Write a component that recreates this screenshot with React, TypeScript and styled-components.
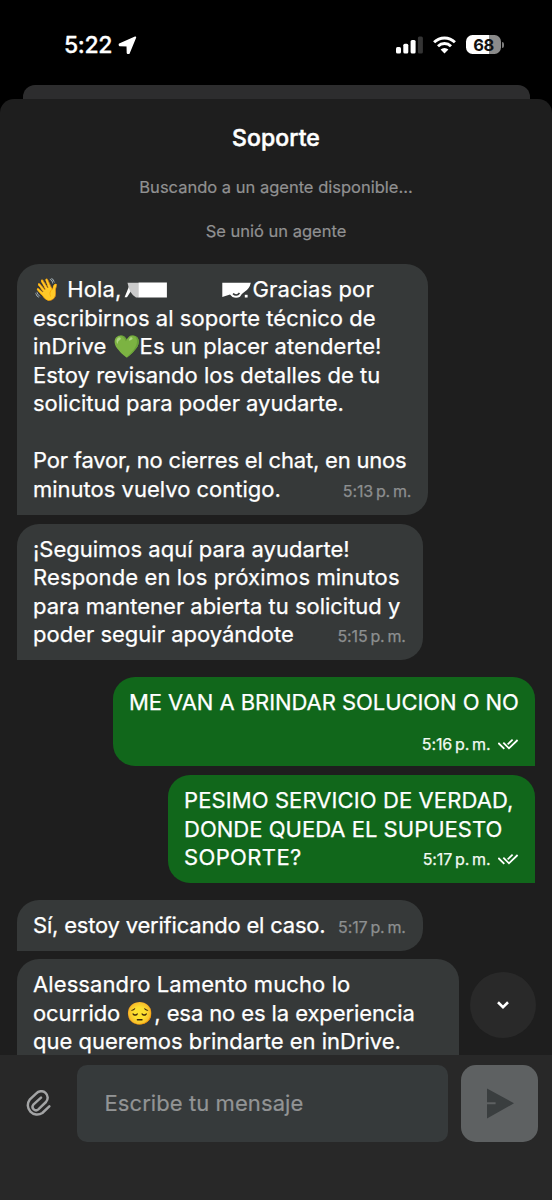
import React from 'react';
import styled, { createGlobalStyle } from 'styled-components';

const GlobalStyle = createGlobalStyle`
  body {
    margin: 0;
    background: #000;
    color: #fff;
    font-family: Inter, "Liberation Sans", sans-serif;
  }
`;

const Screen = styled.div`
  display: flex;
  flex-direction: column;
  width: 552px;
  height: 1200px;
  overflow: hidden;
  background: #000;
`;

const StatusBar = styled.header`
  display: flex;
  justify-content: space-between;
  align-items: center;
  box-sizing: border-box;
  height: 85px;
  padding: 4px 48px 0 64px;
`;

const Clock = styled.div`
  display: flex;
  align-items: center;
  gap: 6px;
  margin-top: 1px;
  font-size: 23px;
  font-weight: 500;
  line-height: 28px;
  letter-spacing: -0.35px;
  -webkit-text-stroke: 0.3px currentColor;
`;

const StatusIcons = styled.div`
  display: flex;
  align-items: center;
  gap: 10px;
`;

const Battery = styled.div`
  display: flex;
  align-items: center;
  gap: 1px;
`;

const BatteryLevel = styled.div`
  width: 35px;
  height: 19px;
  border-radius: 6.5px;
  background: linear-gradient(to right, #fff 67%, #8b8b8b 67%);
  color: #111;
  font-size: 16.5px;
  font-weight: 700;
  line-height: 20px;
  letter-spacing: -0.5px;
  text-align: center;
`;

const BatteryNub = styled.div`
  width: 2px;
  height: 6px;
  border-radius: 0 2px 2px 0;
  background: #7b7b7b;
`;

const BackSheet = styled.div`
  flex: none;
  height: 13.5px;
  margin: 0 22.5px;
  border-radius: 12px 12px 0 0;
  background: #2d2d2e;
`;

const Sheet = styled.main`
  display: flex;
  flex: 1;
  flex-direction: column;
  min-height: 0;
  border-radius: 14px 14px 0 0;
  background: #1e1e1e;
  overflow: hidden;
`;

const Title = styled.h1`
  margin: 23px 0 0;
  font-size: 23px;
  font-weight: 500;
  line-height: 32px;
  letter-spacing: 0.1px;
  text-align: center;
  -webkit-text-stroke: 0.5px currentColor;
`;

const Notice = styled.p<{ $top: number }>`
  margin: ${(p) => p.$top}px 0 0;
  color: #919192;
  font-size: 16.5px;
  line-height: 24px;
  text-align: center;
  -webkit-text-stroke: 0.2px currentColor;
`;

const Conversation = styled.section`
  position: relative;
  display: flex;
  flex: 1;
  flex-direction: column;
  align-items: flex-start;
  min-height: 0;
  margin-top: 21.5px;
  padding: 0 17px;
  overflow: hidden;
`;

const Bubble = styled.article<{ $out?: boolean; $width: number; $gap?: number }>`
  flex: none;
  box-sizing: border-box;
  align-self: ${(p) => (p.$out ? 'flex-end' : 'flex-start')};
  width: ${(p) => p.$width}px;
  margin-top: ${(p) => p.$gap ?? 0}px;
  padding: 11.25px 16px;
  border-radius: ${(p) => (p.$out ? '22px 22px 0 22px' : '22px 22px 22px 0')};
  background: ${(p) => (p.$out ? '#11671b' : '#363939')};
`;

const Line = styled.div<{ $ls?: number }>`
  min-height: 28.5px;
  font-size: 22px;
  line-height: 28.5px;
  letter-spacing: ${(p) => p.$ls ?? 0}px;
  white-space: pre;
  -webkit-text-stroke: 0.25px currentColor;
`;

const FirstLine = styled(Line)`
  display: flex;
`;

const LastRow = styled.div<{ $gap?: number }>`
  display: flex;
  justify-content: space-between;
  height: 28.5px;
  margin-top: ${(p) => p.$gap ?? 0}px;
`;

const Emoji = styled.span<{ $w: number }>`
  display: inline-block;
  width: ${(p) => p.$w}px;
  height: 28.5px;
  letter-spacing: 0;
  vertical-align: top;
  -webkit-text-stroke: 0;
`;

const Stamp = styled.div<{ $out?: boolean; $drop?: number }>`
  display: flex;
  align-items: center;
  gap: 8px;
  height: 28.5px;
  margin: ${(p) => p.$drop ?? 2}px ${(p) => (p.$out ? 0 : 0.7)}px 0 auto;
  color: ${(p) => (p.$out ? '#f3faf3' : '#8d8f90')};
  font-size: 16px;
  line-height: 28.5px;
  letter-spacing: -0.1px;
  word-spacing: -1.6px;
  white-space: nowrap;
  -webkit-text-stroke: 0.25px currentColor;
`;

const ScrollButton = styled.button`
  position: absolute;
  top: 708px;
  right: 16.5px;
  display: grid;
  place-items: center;
  width: 66px;
  height: 66px;
  padding: 0;
  border: 0;
  border-radius: 50%;
  background: #292929;
`;

const Composer = styled.footer`
  display: flex;
  flex: none;
  align-items: flex-start;
  box-sizing: border-box;
  height: 145.5px;
  padding: 10.5px 14px 0 26px;
  background: #282828;
`;

const ClipButton = styled.div`
  display: flex;
  align-items: center;
  width: 51px;
  height: 77px;
`;

const Field = styled.div`
  box-sizing: border-box;
  width: 370.5px;
  height: 77px;
  padding-left: 27.5px;
  border-radius: 10px;
  background: #363a3b;
  color: #929495;
  font-size: 22px;
  line-height: 77px;
  letter-spacing: 0.08px;
  -webkit-text-stroke: 0.2px currentColor;
`;

const SendButton = styled.div`
  display: grid;
  place-items: center;
  box-sizing: border-box;
  width: 77px;
  height: 77px;
  margin-left: auto;
  padding-left: 2px;
  border-radius: 15px;
  background: #5e6162;
`;

const LocationArrow = () => (
  <svg width="19" height="19" viewBox="0 0 19 19">
    <path d="M17.3 1.3 1.5 8.2 1.7 9.4 9.4 9.6 9.6 17 10.8 17.2Z" fill="#fff" stroke="#fff" strokeWidth="1.8" strokeLinejoin="round" />
  </svg>
);

const Signal = () => (
  <svg width="27" height="18" viewBox="0 0 27 18">
    <rect x="0" y="11" width="5" height="6.5" rx="1.5" fill="#fff" />
    <rect x="7.3" y="7.8" width="5" height="9.7" rx="1.5" fill="#fff" />
    <rect x="14.6" y="4" width="5" height="13.5" rx="1.5" fill="#fff" />
    <rect x="21.9" y="0.5" width="5" height="17" rx="1.5" fill="#343434" />
  </svg>
);

const Wifi = () => (
  <svg width="23" height="18" viewBox="0 0 23 18">
    <g fill="none" stroke="#fff" strokeWidth="2.9">
      <path d="M1.1 6.2a14.8 14.8 0 0 1 20.8 0" />
      <path d="M5 10.2a9.3 9.3 0 0 1 13 0" />
    </g>
    <path d="M11.5 17.6 7.6 13.6a5.6 5.6 0 0 1 7.8 0Z" fill="#fff" />
  </svg>
);

const DoubleCheck = () => (
  <svg width="20.6" height="11" viewBox="54 57 62 33" fill="none" stroke="#fff" strokeWidth="5.4">
    <path d="M55 69 73 87M70 68 87 85 113 60M83 73 98 59" />
  </svg>
);

/* Two white marker strokes that cover the customer's name */
const HiddenName = () => (
  <svg width="131" height="28.5" viewBox="121 275.5 131 28.5">
    <path d="M124.6 297.8 129.8 285 131.6 290.5 127 297.8Z" fill="#fff" />
    <path d="M127.5 283.2H139V298H136Q129.5 294.5 127.5 283.2Z" fill="#cbcbcb" />
    <rect x="138.7" y="283" width="28.2" height="15" fill="#fff" />
    <path d="M222.3 283.2H250.8Q249.6 289.5 244 292.7 241 294.5 240 297.2 236.5 299 232.5 297.5L230 295 222.3 297.6Z" fill="#fff" />
    <path d="M233 294.2Q236.5 297.2 239.5 293.4" fill="none" stroke="#363939" strokeWidth="1.6" />
    <rect x="244.8" y="295.3" width="2.8" height="2.7" fill="#fff" />
  </svg>
);

const ChevronDown = () => (
  <svg width="12" height="8" viewBox="0 0 12 8" fill="none" stroke="#fff" strokeWidth="2.6">
    <path d="M1 1.3 6 6.1 11 1.3" />
  </svg>
);

const Paperclip = () => (
  <svg width="25" height="27" viewBox="77 119 75 81" fill="none" stroke="#a3a4a5" strokeWidth="7.4" strokeLinecap="round" strokeLinejoin="round">
    <path d="M147 168 126 188A28 28 0 0 1 88 148L108 129A19 19 0 0 1 137 155L114 177A10.3 10.3 0 0 1 99 163L122 142" />
  </svg>
);

const SendIcon = () => (
  <svg width="27" height="31" viewBox="0 0 27 31">
    <path d="M0 .5 27 15.3 0 30.5V16.3H8.6V14.3H0Z" fill="#3a3e3f" />
  </svg>
);

export default function App() {
  return (
    <Screen>
      <GlobalStyle />
      <StatusBar>
        <Clock>
          5:22
          <LocationArrow />
        </Clock>
        <StatusIcons>
          <Signal />
          <Wifi />
          <Battery>
            <BatteryLevel>68</BatteryLevel>
            <BatteryNub />
          </Battery>
        </StatusIcons>
      </StatusBar>
      <BackSheet />
      <Sheet>
        <Title>Soporte</Title>
        <Notice $top={21.5}>Buscando a un agente disponible...</Notice>
        <Notice $top={19.5}>Se unió un agente</Notice>
        <Conversation>
          <Bubble $width={411}>
            <FirstLine $ls={0.12}>
              <Emoji $w={28}>👋</Emoji> Hola,
              <HiddenName />
              Gracias por
            </FirstLine>
            <Line $ls={0.04}>escribirnos al soporte técnico de</Line>
            <Line $ls={0.06}>
              inDrive <Emoji $w={27}>💚</Emoji>Es un placer atenderte!
            </Line>
            <Line>Estoy revisando los detalles de tu</Line>
            <Line $ls={-0.02}>solicitud para poder ayudarte.</Line>
            <Line />
            <Line $ls={-0.2}>Por favor, no cierres el chat, en unos</Line>
            <LastRow>
              <Line>minutos vuelvo contigo.</Line>
              <Stamp>5:13 p. m.</Stamp>
            </LastRow>
          </Bubble>
          <Bubble $width={405.5} $gap={9}>
            <Line>¡Seguimos aquí para ayudarte!</Line>
            <Line $ls={0.12}>Responde en los próximos minutos</Line>
            <Line $ls={-0.02}>para mantener abierta tu solicitud y</Line>
            <LastRow>
              <Line>poder seguir apoyándote</Line>
              <Stamp>5:15 p. m.</Stamp>
            </LastRow>
          </Bubble>
          <Bubble $out $width={422} $gap={17}>
            <Line $ls={-0.06}>ME VAN A BRINDAR SOLUCION O NO</Line>
            <LastRow $gap={9.5}>
              <Stamp $out $drop={4}>
                5:16 p. m.
                <DoubleCheck />
              </Stamp>
            </LastRow>
          </Bubble>
          <Bubble $out $width={367} $gap={9}>
            <Line $ls={0.1}>PESIMO SERVICIO DE VERDAD,</Line>
            <Line $ls={0.02}>DONDE QUEDA EL SUPUESTO</Line>
            <LastRow>
              <Line $ls={0.37}>SOPORTE?</Line>
              <Stamp $out>
                5:17 p. m.
                <DoubleCheck />
              </Stamp>
            </LastRow>
          </Bubble>
          <Bubble $width={405.5} $gap={16.5}>
            <LastRow>
              <Line $ls={-0.2}>Sí, estoy verificando el caso.</Line>
              <Stamp>5:17 p. m.</Stamp>
            </LastRow>
          </Bubble>
          <Bubble $width={441.5} $gap={8.5}>
            <Line $ls={0.1}>Alessandro Lamento mucho lo</Line>
            <Line $ls={-0.1}>
              ocurrido <Emoji $w={28}>😔</Emoji>, esa no es la experiencia
            </Line>
            <Line>que queremos brindarte en inDrive.</Line>
            <Line />
          </Bubble>
          <ScrollButton aria-label="Ir al final">
            <ChevronDown />
          </ScrollButton>
        </Conversation>
        <Composer>
          <ClipButton>
            <Paperclip />
          </ClipButton>
          <Field>Escribe tu mensaje</Field>
          <SendButton>
            <SendIcon />
          </SendButton>
        </Composer>
      </Sheet>
    </Screen>
  );
}
